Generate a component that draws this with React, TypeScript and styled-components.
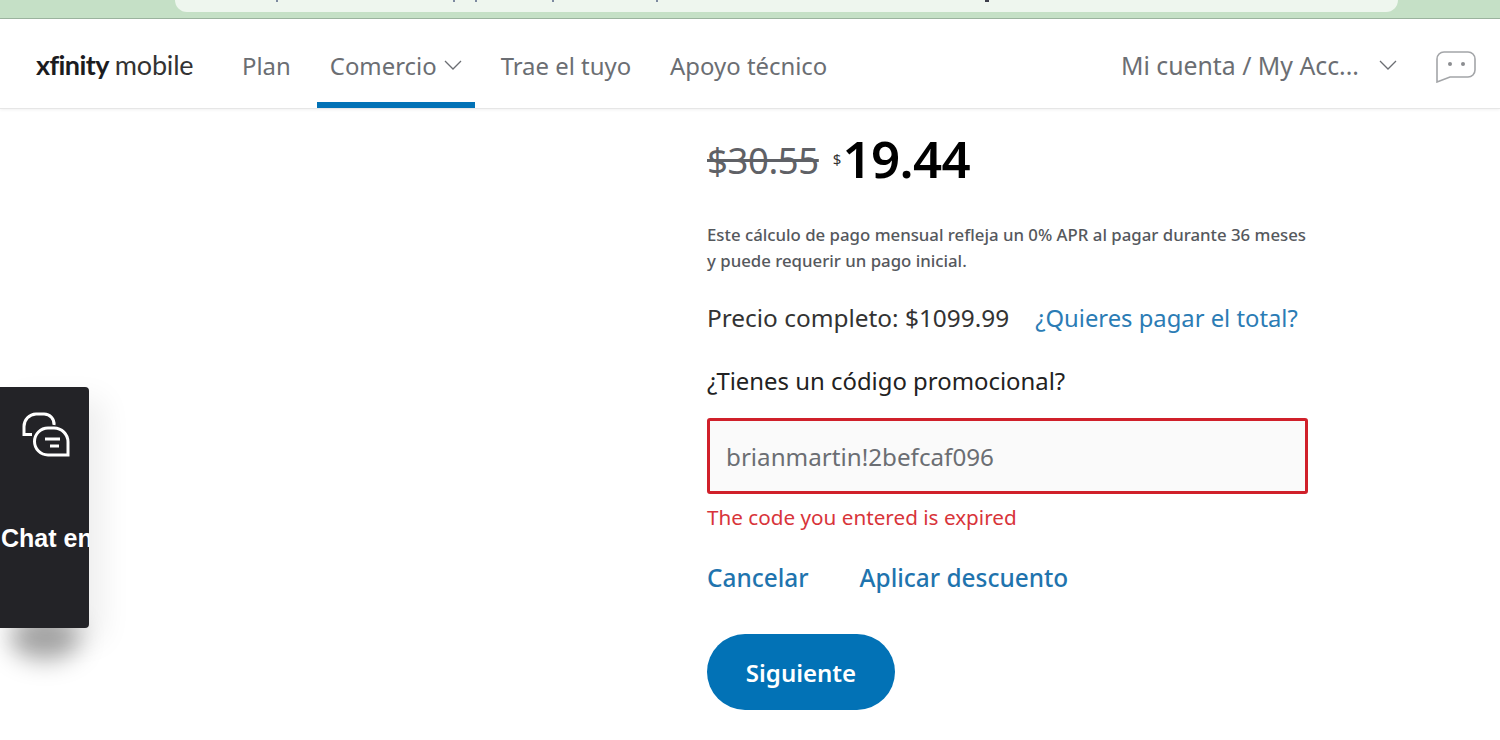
import { createGlobalStyle, styled } from 'styled-components';

const GlobalStyle = createGlobalStyle`
  html, body {
    margin: 0;
    height: 100%;
    background: #fff;
    overflow: hidden;
    font-family: "Noto Sans", "Open Sans", sans-serif;
  }
  * { box-sizing: border-box; }
`;

const Page = styled.div`
  position: relative;
  width: 1500px;
  height: 740px;
  overflow: hidden;
`;

const TopStrip = styled.div`
  height: 19px;
  background: #c5e0c6;
  border-bottom: 1px solid #9db5a0;
  padding: 0 102px 0 175px;
`;

const StripPill = styled.div`
  position: relative;
  height: 12px;
  background: #eef6ee;
  border-radius: 0 0 16px 16px;
`;

/* bottoms of the letters of the cropped banner text */
const StripTick = styled.i<{ $left: number; $dark?: boolean }>`
  position: absolute;
  top: 0;
  left: ${(p) => p.$left - 175}px;
  width: ${(p) => (p.$dark ? 4 : 2)}px;
  height: 2px;
  background: ${(p) => (p.$dark ? '#3c3f4a' : '#7d8aa0')};
`;

const Header = styled.header`
  height: 90px;
  display: flex;
  align-items: stretch;
  padding-left: 36px;
  background: #fff;
  border-bottom: 1px solid #e6e6e6;
  box-shadow: 0 1px 3px rgba(0, 0, 0, 0.06);
`;

const Logo = styled.div`
  display: flex;
  align-items: center;
  gap: 6px;
  width: 193px;
  padding-top: 2px;
  color: #1c1c1f;
  font-family: "Lato", sans-serif;
  font-size: 27px;
`;

const LogoBold = styled.span`
  font-weight: 700;
  letter-spacing: -0.6px;
`;

const LogoLight = styled.span`
  letter-spacing: -0.2px;
  color: #333;
`;

const Nav = styled.nav`
  display: flex;
  align-items: stretch;
  gap: 13px;
  flex: 1;
`;

const NavItem = styled.a<{ $active?: boolean }>`
  display: flex;
  align-items: center;
  gap: 7px;
  padding: 14px 13px 4px;
  color: #6b6e73;
  font-size: 23.9px;
  white-space: nowrap;
  border-bottom: 6px solid ${(p) => (p.$active ? '#0272b6' : 'transparent')};
`;

const Account = styled.div`
  display: flex;
  align-items: center;
  gap: 20px;
  padding: 3px 24px 0 0;
  color: #6b6e73;
  font-size: 24.8px;
`;

const BubbleWrap = styled.div`
  display: flex;
  margin: 4px 0 0 19px;
`;

const Main = styled.main`
  width: 601px;
  margin-left: 707px;
  padding-top: 23px;
`;

const PriceRow = styled.div`
  display: flex;
  align-items: flex-start;
  height: 60px;
`;

const OldPrice = styled.s`
  margin-top: 6px;
  color: #5f6166;
  font-size: 36.5px;
  line-height: 44px;
  letter-spacing: -0.4px;
`;

const Currency = styled.span`
  margin: 17px 1px 0 14px;
  color: #333;
  font-size: 15px;
  line-height: 20px;
`;

const NewPrice = styled.span`
  margin-top: -4px;
  color: #000;
  font-size: 51px;
  line-height: 60px;
  font-weight: 600;
  letter-spacing: -0.6px;
`;

const Disclaimer = styled.p`
  margin: 30px 0 0;
  color: #55585d;
  font-size: 16.8px;
  line-height: 26px;
  font-weight: 500;
  white-space: nowrap;
`;

const PriceLine = styled.div`
  display: flex;
  gap: 26px;
  margin-top: 28px;
  color: #333;
  font-size: 24.4px;
  line-height: 32px;
`;

const TextLink = styled.a`
  color: #2b7cb5;
  font-size: 23.8px;
`;

const PromoLabel = styled.div`
  margin-top: 31px;
  color: #222;
  font-size: 23.9px;
  line-height: 32px;
`;

const PromoInput = styled.div`
  display: flex;
  align-items: center;
  height: 76px;
  margin-top: 21px;
  padding-left: 16px;
  background: #fafafa;
  border: 3px solid #d0202a;
  border-radius: 3px;
  color: #6b6e73;
  font-size: 24.2px;
`;

const ErrorText = styled.div`
  margin-top: 8px;
  color: #d8343a;
  font-size: 20.7px;
  line-height: 30px;
`;

const Actions = styled.div`
  display: flex;
  gap: 51px;
  margin-top: 30px;
  font-size: 24.4px;
  line-height: 32px;
  font-weight: 500;
`;

const ActionLink = styled.a`
  color: #1f74ae;
`;

const NextButton = styled.button`
  display: block;
  width: 188px;
  height: 76px;
  margin-top: 40px;
  border: 0;
  border-radius: 38px;
  background: #0272b6;
  color: #fff;
  font-family: inherit;
  font-size: 24px;
  font-weight: 600;
`;

const ChatTab = styled.aside`
  position: absolute;
  left: 0;
  top: 387px;
  width: 89px;
  height: 241px;
  background: #232327;
  border-radius: 0 4px 4px 0;
  box-shadow: 14px 12px 30px rgba(0, 0, 0, 0.07);
  overflow: hidden;
  color: #fff;
  font-family: "Liberation Sans", Arial, sans-serif;
  font-size: 25px;
  font-weight: 700;
  white-space: nowrap;
`;

const ChatBlob = styled.div`
  position: absolute;
  left: 10px;
  top: 616px;
  width: 70px;
  height: 44px;
  border-radius: 50%;
  background: rgba(0, 0, 0, 0.34);
  filter: blur(12px);
`;

const ChatIconWrap = styled.div`
  margin: 25px 0 0 21px;
  height: 50px;
`;

const ChatLabel = styled.div`
  margin-top: 60px;
  padding-left: 1px;
  line-height: 32px;
`;

function Chevron() {
  return (
    <svg width="18" height="11" viewBox="0 0 18 11" fill="none" stroke="#6b6e73" strokeWidth="1.3">
      <path d="M1 1l8 8 8-8" />
    </svg>
  );
}

function SupportBubble() {
  return (
    <svg width="40" height="32" viewBox="0 0 40 32" fill="none" stroke="#a3a5a8" strokeWidth="1.6">
      <path d="M8 1h24a7 7 0 0 1 7 7v11a7 7 0 0 1-7 7H14L1 31V8a7 7 0 0 1 7-7z" />
      <circle cx="14" cy="13" r="2" fill="#8b8d90" stroke="none" />
      <circle cx="27" cy="13" r="2" fill="#8b8d90" stroke="none" />
    </svg>
  );
}

function ChatIcon() {
  return (
    <svg width="50" height="46" viewBox="0 0 50 46" fill="none" stroke="#fff" strokeWidth="3">
      <path d="M11 22.5H3v-8A12.5 12.5 0 0 1 15 2h8a10 10 0 0 1 10 11" />
      <path d="M47 43H27a13.5 13.5 0 0 1 0-27h6a14 14 0 0 1 14 14z" />
      <path d="M24 27h15M29 34h9" />
    </svg>
  );
}

const stripTicks = [276, 453, 475, 552, 656];

export default function App() {
  return (
    <Page>
      <GlobalStyle />
      <TopStrip>
        <StripPill>
          {stripTicks.map((x) => (
            <StripTick key={x} $left={x} />
          ))}
          <StripTick $left={985} $dark />
        </StripPill>
      </TopStrip>
      <Header>
        <Logo>
          <LogoBold>xfinity</LogoBold>
          <LogoLight>mobile</LogoLight>
        </Logo>
        <Nav>
          <NavItem>Plan</NavItem>
          <NavItem $active>
            Comercio <Chevron />
          </NavItem>
          <NavItem>Trae el tuyo</NavItem>
          <NavItem>Apoyo técnico</NavItem>
        </Nav>
        <Account>
          <span>Mi cuenta / My Acc...</span>
          <Chevron />
          <BubbleWrap>
            <SupportBubble />
          </BubbleWrap>
        </Account>
      </Header>
      <Main>
        <PriceRow>
          <OldPrice>$30.55</OldPrice>
          <Currency>$</Currency>
          <NewPrice>19.44</NewPrice>
        </PriceRow>
        <Disclaimer>
          Este cálculo de pago mensual refleja un 0% APR al pagar durante 36 meses
          <br />y puede requerir un pago inicial.
        </Disclaimer>
        <PriceLine>
          <span>Precio completo: $1099.99</span>
          <TextLink>¿Quieres pagar el total?</TextLink>
        </PriceLine>
        <PromoLabel>¿Tienes un código promocional?</PromoLabel>
        <PromoInput>brianmartin!2befcaf096</PromoInput>
        <ErrorText>The code you entered is expired</ErrorText>
        <Actions>
          <ActionLink>Cancelar</ActionLink>
          <ActionLink>Aplicar descuento</ActionLink>
        </Actions>
        <NextButton>Siguiente</NextButton>
      </Main>
      <ChatBlob />
      <ChatTab>
        <ChatIconWrap>
          <ChatIcon />
        </ChatIconWrap>
        <ChatLabel>Chat en vivo</ChatLabel>
      </ChatTab>
    </Page>
  );
}
